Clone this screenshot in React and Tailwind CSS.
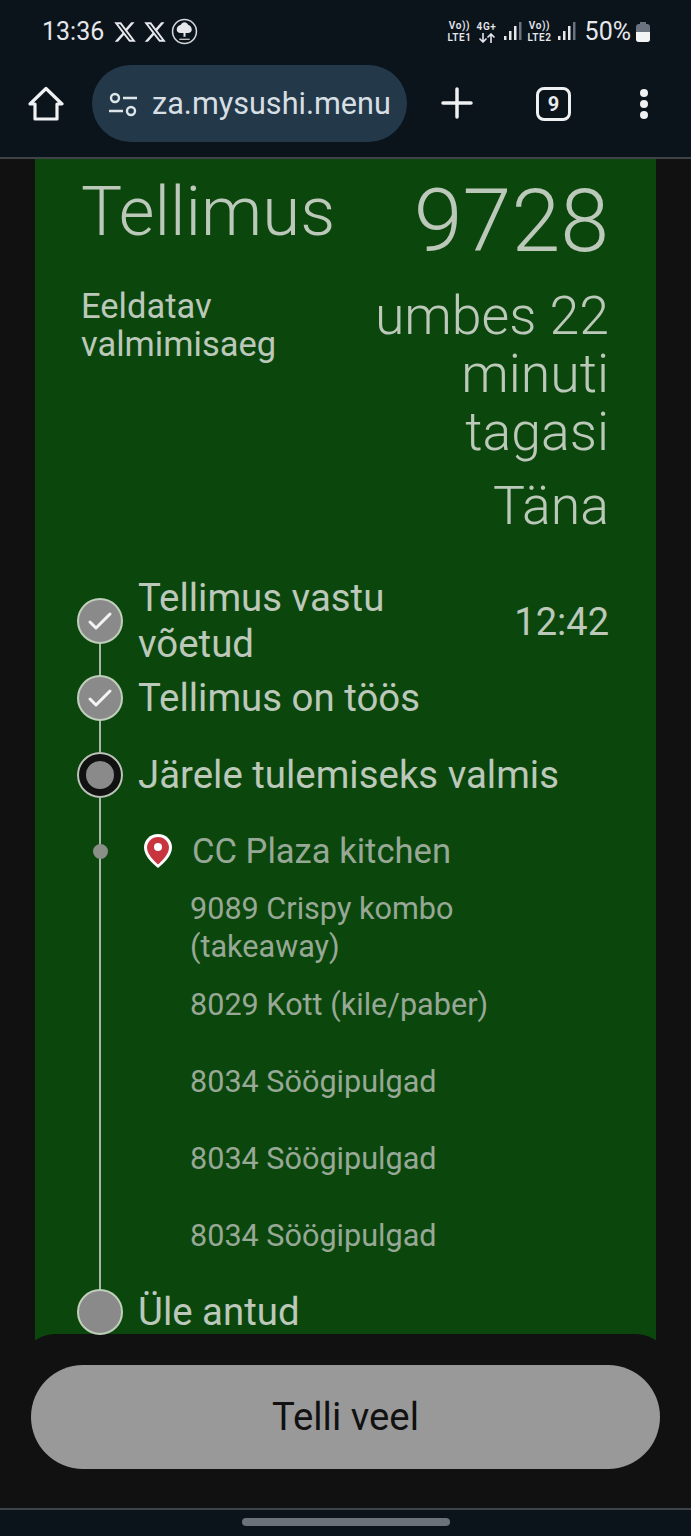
import React from 'react';
import { FaXTwitter } from 'react-icons/fa6';

function Signal({ dim }) {
  return (
    <svg width="18" height="19" viewBox="0 0 18 19" fill="none">
      <rect x="0" y="14" width="2.500" height="4" fill="#e5e7eb" />
      <rect x="5" y="9" width="2.500" height="9" fill="#e5e7eb" />
      <rect x="10" y="4" width="2.500" height="14" fill="#e5e7eb" />
      <rect x="15" y="0" width="2.500" height="18" fill={dim} />
    </svg>
  );
}

function StatusBar() {
  const net = 'text-center text-[10px] leading-[12px] tracking-[0.6px] font-semibold text-[#e5e7eb]';
  return (
    <div className="h-[62px] flex items-center justify-between pl-[42px] pr-[41px] pt-[1px] text-[#e5e7eb]">
      <div className="flex items-center">
        <span className="text-[25px] leading-none mr-[9px]">13:36</span>
        <FaXTwitter className="w-[24px] h-[24px] mr-[6px]" />
        <FaXTwitter className="w-[24px] h-[24px] mr-[4px]" />
        <svg width="27" height="27" viewBox="0 0 26 26" fill="none">
          <circle cx="13" cy="13" r="11.500" stroke="#d5d8da" strokeWidth="1.500" />
          <path d="M13 4c1.500 0 2.800 1 3.500 2.500 2 .5 3.500 2.500 3.500 4.500 0 2-1.500 3.500-3.500 3.500H9c-2 0-3.500-1.500-3.500-3.500S7 7 9.500 6.500C10.200 5 11.500 4 13 4z" fill="#e5e7eb" />
          <path d="M12 14h2v4h-2z" fill="#e5e7eb" />
          <path d="M8 20.500h10" stroke="#c8ccce" strokeWidth="1.200" />
        </svg>
      </div>
      <div className="flex items-center">
        <div className={net}>Vo))<br />LTE1</div>
        <div className="ml-[5px] mr-[8px] flex flex-col items-center">
          <div className={net}>4G+</div>
          <svg width="18" height="10" viewBox="0 0 18 10" fill="none" stroke="#e5e7eb" strokeWidth="1.600">
            <path d="M5 0v9M1.500 5.500 5 9l3.500-3.500M13 10V1M9.500 4.500 13 1l3.500 3.500" />
          </svg>
        </div>
        <Signal dim="#6b7280" />
        <div className={`ml-[5px] mr-[6px] ${net}`}>Vo))<br />LTE2</div>
        <Signal dim="#6b7280" />
        <span className="text-[25px] leading-none ml-[9px] mr-[5px]">50%</span>
        <div className="flex flex-col items-center">
          <div className="w-[6px] h-[2px] bg-[#6b7280]" />
          <div className="relative w-[14px] h-[18px] rounded-[3px] bg-[#6b7280] overflow-hidden">
            <div className="absolute left-0 right-0 bottom-0 h-[10px] bg-[#f3f4f6]" />
          </div>
        </div>
      </div>
    </div>
  );
}

function AddressBar() {
  return (
    <div className="h-[95px] flex items-start pl-[28px] pr-[38px] pt-[3px] text-[#e8eaed]">
      <svg width="36" height="36" viewBox="0 0 36 36" fill="none" className="mt-[21px]" stroke="#eef0f2" strokeWidth="3.200" strokeLinejoin="round" strokeLinecap="round">
        <path d="M2 18 18 2.500 34 18h-5v15H7V18z" />
      </svg>
      <div className="ml-[28px] w-[315px] h-[77px] rounded-full bg-[#23394a] flex items-center pl-[16px] pt-[2px]">
        <svg width="30" height="26" viewBox="0 0 30 26" fill="none" stroke="#dfe6ea" strokeWidth="2.400">
          <circle cx="7" cy="6" r="4" />
          <path d="M15 6h14M1 19h14" />
          <circle cx="23" cy="19" r="4" />
        </svg>
        <span className="ml-[14px] text-[30.6px] leading-none text-[#d7dfe4]">za.mysushi.menu</span>
      </div>
      <svg width="32" height="32" viewBox="0 0 32 32" className="ml-[34px] mt-[22px]" stroke="#eef0f2" strokeWidth="3.500" strokeLinecap="round">
        <path d="M16 2v28M2 16h28" />
      </svg>
      <div className="ml-[63px] mt-[22px] w-[35px] h-[34px] rounded-[8px] border-[3px] border-[#eef0f2] flex items-center justify-center text-[20px] font-bold leading-none">9</div>
      <div className="ml-[69px] mt-[24px] flex flex-col gap-[3px]">
        <div className="w-[8px] h-[8px] rounded-full bg-[#eef0f2]" />
        <div className="w-[8px] h-[8px] rounded-full bg-[#eef0f2]" />
        <div className="w-[8px] h-[8px] rounded-full bg-[#eef0f2]" />
      </div>
    </div>
  );
}

function Dot({ children }) {
  return (
    <div className="relative z-10 w-[46px] h-[46px] shrink-0 rounded-full bg-[#8a8a8a] border-[2px] border-[#c0cfbb] flex items-center justify-center">
      {children}
    </div>
  );
}

function Check() {
  return (
    <svg width="26" height="20" viewBox="0 0 26 20" fill="none" stroke="#f3f4f6" strokeWidth="3" strokeLinecap="round" strokeLinejoin="round">
      <path d="M3 11l6 6L23 3" />
    </svg>
  );
}

function Item({ text }) {
  return <div className="min-h-[57px] w-[380px] text-[30.6px] leading-[38px]">{text}</div>;
}

function Timeline() {
  return (
    <div className="relative mt-[40px] ml-[42px] mr-[47px]">
      <div className="absolute left-[22px] top-[46px] bottom-[24px] w-[2px] bg-[#a9b5a6]" />
      <div className="flex items-center">
        <Dot><Check /></Dot>
        <div className="ml-[15px] w-[300px] text-[38.4px] leading-[46px]">Tellimus vastu võetud</div>
        <div className="ml-auto text-[38px] leading-[46px] pt-[1px]">12:42</div>
      </div>
      <div className="flex items-center mt-[8px]">
        <Dot><Check /></Dot>
        <div className="ml-[15px] text-[38.4px] leading-[46px]">Tellimus on töös</div>
      </div>
      <div className="flex items-center mt-[31px]">
        <div className="relative z-10 w-[46px] h-[46px] shrink-0 rounded-full bg-[#8a8a8a] border-[9px] border-[#111] outline-[2px] outline-[#b9c4b5] outline-offset-[-2px]" />
        <div className="ml-[15px] text-[38.4px] leading-[46px]">Järele tulemiseks valmis</div>
      </div>
      <div className="text-[#98a896]">
        <div className="flex items-center mt-[30px] h-[46px]">
          <div className="relative z-10 ml-[16px] w-[15px] h-[15px] rounded-full bg-[#8a8f88]" />
          <svg width="30" height="36" viewBox="0 0 30 36" className="ml-[35px]">
            <path d="M15 1C7 1 1 7 1 14.500 1 23 10 31 15 35c5-4 14-12 14-20.500C29 7 23 1 15 1z" fill="#fff" />
            <path d="M15 4C9 4 4 9 4 14.500 4 21 11 28 15 31.500c4-3.500 11-10.500 11-17C26 9 21 4 15 4z" fill="#c9353f" />
            <circle cx="15" cy="14" r="4" fill="#fff" />
          </svg>
          <span className="ml-[19px] text-[34.6px] leading-[46px]">CC Plaza kitchen</span>
        </div>
        <div className="ml-[113px] mt-[16px] flex flex-col gap-[20px]">
          <Item text="9089 Crispy kombo (takeaway)" />
          <Item text="8029 Kott (kile/paber)" />
          <Item text="8034 Söögipulgad" />
          <Item text="8034 Söögipulgad" />
          <Item text="8034 Söögipulgad" />
        </div>
      </div>
      <div className="flex items-center mt-[15px]">
        <Dot />
        <div className="ml-[15px] text-[38.4px] leading-[46px]">Üle antud</div>
      </div>
    </div>
  );
}

export default function App() {
  return (
    <div className="relative w-[691px] h-[1536px] overflow-hidden flex flex-col bg-[#111] font-['Roboto',sans-serif]">
      <header className="h-[159px] shrink-0 bg-[#0b131b] border-b-[2px] border-[#3d4347]">
        <StatusBar />
        <AddressBar />
      </header>
      <main className="flex-1 min-h-0 px-[35px]">
        <div className="h-full bg-[#0b470d] text-[#bcc8ba] overflow-hidden">
          <div className="flex justify-between items-start pl-[46px] pr-[47px]">
            <div className="text-[69px] leading-[70px] mt-[18px] font-light">Tellimus</div>
            <div className="text-[88px] leading-[90px] mt-[17px] font-light">9728</div>
          </div>
          <div className="flex justify-between items-start pl-[46px] pr-[47px] mt-[17px]">
            <div className="w-[210px] text-[34.5px] leading-[38px] mt-[4px]">Eeldatav valmimisaeg</div>
            <div className="w-[250px] text-right text-[53.6px] leading-[58px] font-light mt-[4px]">
              umbes 22 minuti tagasi
              <div className="mt-[16px]">Täna</div>
            </div>
          </div>
          <Timeline />
        </div>
      </main>
      <div className="absolute left-0 right-0 bottom-[28px] h-[174px] px-[31px] pt-[31px]">
        <div className="absolute left-[20px] right-[20px] top-0 h-[174px] rounded-t-[35px] bg-[#111]" />
        <div className="relative h-[104px] rounded-full bg-[#999] flex items-center justify-center text-[38.3px] text-[#111]">Telli veel</div>
      </div>
      <footer className="h-[28px] shrink-0 bg-[#0b131b] border-t-[2px] border-[#3d4347] flex justify-center pt-[8px]">
        <div className="w-[208px] h-[8px] rounded-full bg-[#6b7378]" />
      </footer>
    </div>
  );
}
